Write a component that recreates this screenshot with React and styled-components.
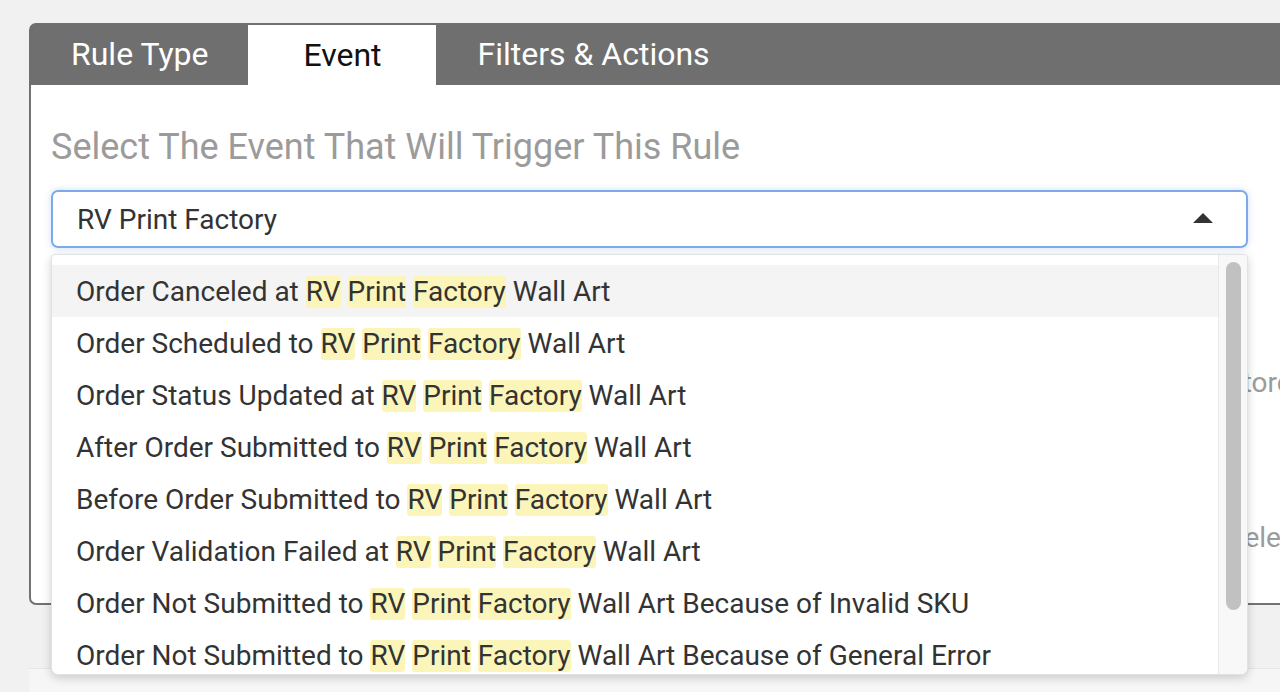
import React from 'react';
import styled, { createGlobalStyle } from 'styled-components';

const GlobalStyle = createGlobalStyle`
  html, body {
    margin: 0;
    padding: 0;
    background: #f1f1f1;
    font-family: Roboto, "Liberation Sans", Arial, sans-serif;
    overflow: hidden;
  }
`;

const Page = styled.div`
    display: flex;
    flex-direction: column;
    min-height: 692px;
    padding: 23px 0 0 29px;
    box-sizing: border-box;
    background: #f1f1f1;
`;

const Panel = styled.div`
    width: 1300px;
    display: flex;
    flex-direction: column;
`;

const TabBar = styled.div`
    display: flex;
    align-items: flex-end;
    height: 62px;
    background: #6f6f6f;
    border-radius: 7px 0 0 0;
`;

const Tab = styled.div`
    height: ${({ $active }) => ($active ? '60px' : '62px')};
    min-width: 188px;
    display: flex;
    align-items: center;
    justify-content: center;
    padding: 0 41px;
    font-size: 32px;
    background: ${({ $active }) => ($active ? '#fff' : 'transparent')};
    color: ${({ $active }) => ($active ? '#111' : '#fff')};
    box-sizing: border-box;
    ${({ $first }) => $first && 'padding: 0 40px 0 42px; border-radius: 7px 0 0 0;'}
`;

const Body = styled.div`
    background: #fff;
    border-left: 2px solid #727272;
    border-bottom: 2px solid #727272;
    border-radius: 0 0 0 7px;
    height: 520px;
    box-sizing: border-box;
    padding: 39px 20px 0 20px;
`;

const Heading = styled.h2`
    margin: 0;
    font-size: 36px;
    line-height: 46px;
    font-weight: 400;
    color: #9b9b9b;
`;

const SelectWrap = styled.div`
    position: relative;
    width: 1197px;
    margin-top: 20px;
`;

const SelectBox = styled.div`
    height: 58px;
    border: 2px solid #7eaaea;
    border-radius: 7px;
    box-shadow: 0 0 7px rgba(110, 160, 235, 0.35);
    display: flex;
    align-items: center;
    justify-content: space-between;
    padding: 0 33px 0 24px;
    box-sizing: border-box;
    font-size: 28px;
    color: #333;
`;

const Caret = styled.span`
    width: 0;
    height: 0;
    border-left: 10px solid transparent;
    border-right: 10px solid transparent;
    border-bottom: 10px solid #333;
    margin-top: -3px;
`;

const Dropdown = styled.div`
    position: absolute;
    top: 64px;
    left: 0;
    width: 1197px;
    height: 421px;
    background: #fff;
    border: 1px solid #e2e2e2;
    border-radius: 4px 4px 7px 7px;
    box-shadow: 0 3px 10px rgba(0, 0, 0, 0.18);
    box-sizing: border-box;
    display: flex;
    overflow: hidden;
    z-index: 2;
`;

const List = styled.ul`
    flex: 1;
    list-style: none;
    margin: 0;
    padding: 10px 0 0 0;
`;

const Item = styled.li`
    height: 52px;
    display: flex;
    align-items: center;
    padding-left: 24px;
    font-size: 28px;
    color: #333;
    white-space: pre;
    background: ${({ $hover }) => ($hover ? '#f4f4f4' : 'transparent')};
`;

const Mark = styled.span`
    background: #fcf5b9;
    border-radius: 3px;
    line-height: 32px;
    display: inline-block;
`;

const Track = styled.div`
    width: 29px;
    background: #f8f8f8;
    border-left: 1px solid #e8e8e8;
    padding: 7px 6px 0 7px;
    box-sizing: border-box;
`;

const Thumb = styled.div`
    height: 348px;
    background: #c1c1c1;
    border-radius: 8px;
`;

const Under = styled.div`
    margin-top: 77px;
    border-top: 1px solid #dedede;
    display: flex;
    flex-direction: column;
    padding-left: 1174px;
`;

const UnderText = styled.div`
    font-size: 28px;
    color: #9b9b9b;
    margin-left: ${({ $shift }) => $shift}px;
    margin-top: ${({ $top }) => $top}px;
`;

const Footer = styled.div`
    margin-top: 63px;
    flex: 1;
    border-top: 1px solid #e6e6e6;
    background: #f6f6f6;
`;

const events = [
    ['Order Canceled at', 'Wall Art'],
    ['Order Scheduled to', 'Wall Art'],
    ['Order Status Updated at', 'Wall Art'],
    ['After Order Submitted to', 'Wall Art'],
    ['Before Order Submitted to', 'Wall Art'],
    ['Order Validation Failed at', 'Wall Art'],
    ['Order Not Submitted to', 'Wall Art Because of Invalid SKU'],
    ['Order Not Submitted to', 'Wall Art Because of General Error'],
];

const App = () => {
    return (
        <Page>
            <GlobalStyle />
            <Panel>
                <TabBar>
                    <Tab $first>Rule Type</Tab>
                    <Tab $active>Event</Tab>
                    <Tab>Filters &amp; Actions</Tab>
                </TabBar>
                <Body>
                    <Heading>Select The Event That Will Trigger This Rule</Heading>
                    <SelectWrap>
                        <SelectBox>
                            RV Print Factory
                            <Caret />
                        </SelectBox>
                        <Dropdown>
                            <List>
                                {events.map(([before, after], i) => (
                                    <Item key={i} $hover={i === 0}>
                                        <span>
                                            {before + ' '}
                                            <Mark>RV</Mark>{' '}
                                            <Mark>Print</Mark>{' '}
                                            <Mark>Factory</Mark>
                                            {' ' + after}
                                        </span>
                                    </Item>
                                ))}
                            </List>
                            <Track>
                                <Thumb />
                            </Track>
                        </Dropdown>
                        <Under>
                            <UnderText $shift={1} $top={40}>Store</UnderText>
                            <UnderText $shift={1} $top={122}>Delete</UnderText>
                        </Under>
                    </SelectWrap>
                </Body>
            </Panel>
            <Footer />
        </Page>
    );
};

export default App;
